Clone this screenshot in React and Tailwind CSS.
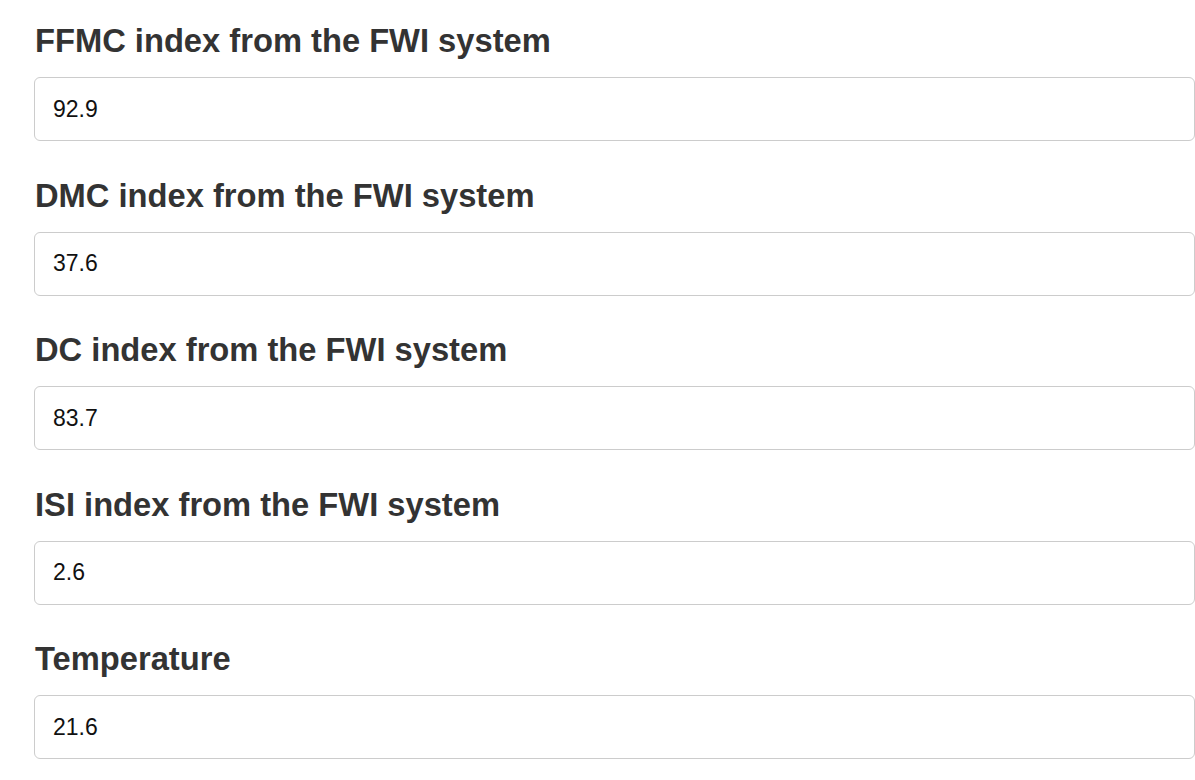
export default function App() {
  const fields = [
    { label: "FFMC index from the FWI system", value: "92.9" },
    { label: "DMC index from the FWI system", value: "37.6" },
    { label: "DC index from the FWI system", value: "83.7" },
    { label: "ISI index from the FWI system", value: "2.6" },
    { label: "Temperature", value: "21.6" },
  ];

  return (
    <div className="min-h-screen bg-white pl-[34px] pt-[23px] font-['Liberation_Sans',Arial,sans-serif]">
      {fields.map((f) => (
        <div key={f.label} className="mb-[36.5px]">
          {/* Field label */}
          <h3 className="mb-[18px] pl-px text-[32.7px] font-bold leading-[36px] text-[#333333]">
            {f.label}
          </h3>
          {/* Value box */}
          <input
            type="text"
            defaultValue={f.value}
            className="box-border h-[64px] w-[1161px] rounded-[6px] border border-[#cccccc] bg-white pl-[18px] text-[23px] text-[#111111] outline-none"
          />
        </div>
      ))}
    </div>
  );
}
